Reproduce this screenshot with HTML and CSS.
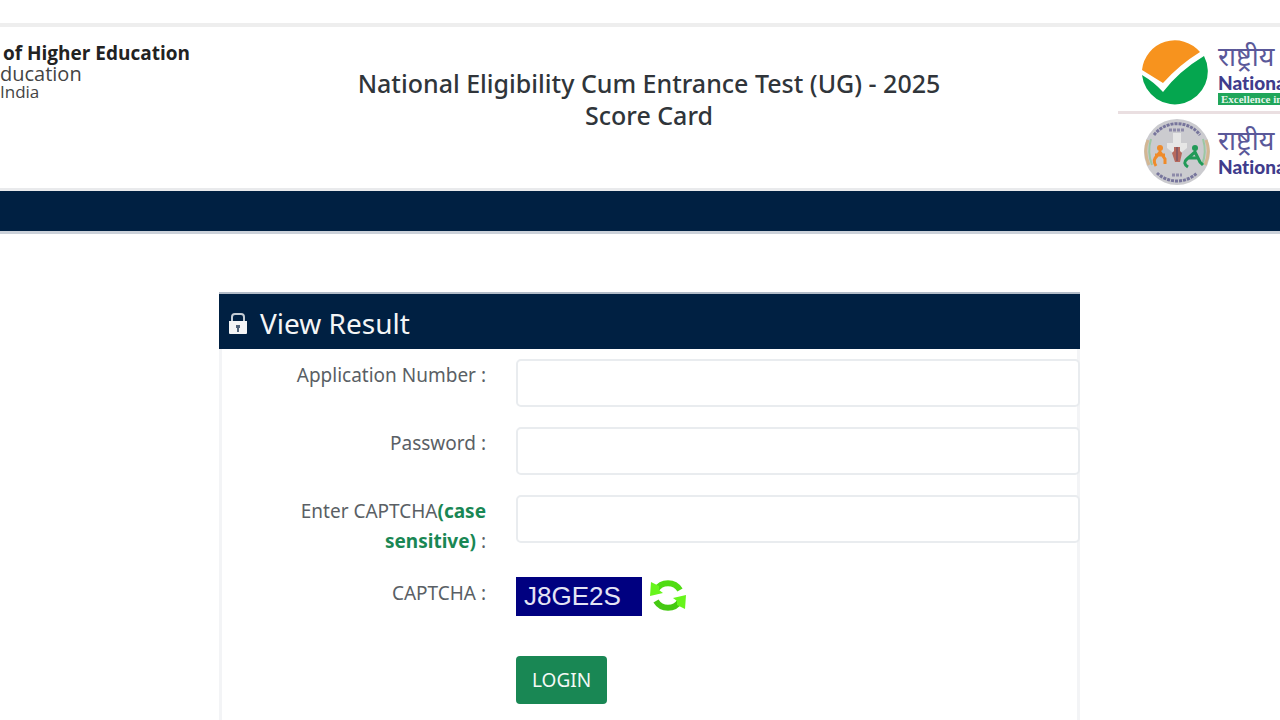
FILE: index.html
```html
<!DOCTYPE html>
<html lang="en">

<head>
    <meta charset="UTF-8">
    <meta name="viewport" content="width=device-width, initial-scale=1.0">
    <title>Score Card</title>
    <link rel="stylesheet" href="styles.css">
</head>

<body>

    <header class="header">
        <div class="department">
            <div class="dept-name">of Higher Education</div>
            <div class="dept-ministry">ducation</div>
            <div class="dept-country">India</div>
        </div>

        <h1 class="title">National Eligibility Cum Entrance Test (UG) - 2025<br>Score Card</h1>

        <div class="logos">
            <div class="logo">
                <svg class="logo-mark" viewBox="0 0 68 68" aria-hidden="true">
                    <path d="M0 32A33 33 0 0 1 58 14Q37 27 21 45Z" fill="#f7931e"/>
                    <path d="M0 37Q12 44 21 54Q37 33 62 18A33 33 0 1 1 0 37Z" fill="#05a64f"/>
                </svg>
                <div class="logo-text">
                    <div class="logo-hindi" lang="hi">राष्ट्रीय</div>
                    <div class="logo-name">Nationa</div>
                    <div class="logo-tag">Excellence in</div>
                </div>
            </div>
            <div class="logo">
                <svg class="logo-mark" viewBox="0 0 68 68" aria-hidden="true">
                    <circle cx="35" cy="34" r="33" fill="#cbcbcf"/>
                    <path d="M12 17A29 29 0 0 1 58 17M15 55A29 29 0 0 0 55 55" fill="none" stroke="#77759c" stroke-width="3" stroke-dasharray="3 1"/>
                    <path d="M6 22Q1 34 7 47" fill="none" stroke="#d3b793" stroke-width="3"/>
                    <path d="M9 21Q5 34 10 47" fill="none" stroke="#9bc7a3" stroke-width="2"/>
                    <path d="M64 22Q69 34 63 47" fill="none" stroke="#d3b793" stroke-width="3"/>
                    <path d="M61 21Q65 34 60 47" fill="none" stroke="#9bc7a3" stroke-width="2"/>
                    <path d="M31 15h8v10h6v5l-5 4h-10l-5-4v-5h6z" fill="#e6e6e6"/>
                    <path d="M27 12h16M30 57h10" stroke="#8d8aa9" stroke-width="3" stroke-dasharray="3 1"/>
                    <circle cx="18" cy="30" r="3" fill="#ef8b2b"/>
                    <path d="M14 48Q10 42 15 38L18 34L23 41V46M13 37H23" fill="none" stroke="#ef8b2b" stroke-width="3"/>
                    <path d="M32 29h6v4l2 2l-2 9h-5l-3-9l2-2z" fill="#b7695d"/>
                    <path d="M35 29v14" stroke="#8b5962" stroke-width="2"/>
                    <circle cx="53" cy="30" r="3" fill="#229a58"/>
                    <path d="M46 49Q40 45 45 41L53 34L58 44L61 47M47 40H57" fill="none" stroke="#229a58" stroke-width="3"/>
                </svg>
                <div class="logo-text">
                    <div class="logo-hindi" lang="hi">राष्ट्रीय</div>
                    <div class="logo-name">Nationa</div>
                </div>
            </div>
        </div>
    </header>

    <nav class="navbar"></nav>

    <main class="content">
        <form class="card">
            <div class="card-header">
                <svg class="lock" viewBox="0 0 18 24" aria-hidden="true">
                    <path d="M3 11V6Q3 3 6 3H12Q15 3 15 6V11" fill="none" stroke="#c4ccd4" stroke-width="2"/>
                    <path d="M0 10H18V22Q18 23 17 23H1Q0 23 0 22Z" fill="#f4f5f6"/>
                    <path d="M7 14h4v3h-1v4h-2v-4h-1z" fill="#52647a"/>
                </svg>
                <h2 class="card-title">View Result</h2>
            </div>

            <div class="card-body">
                <label class="label" for="appno">Application Number :</label>
                <input class="input" type="text" id="appno">

                <label class="label" for="password">Password :</label>
                <input class="input" type="password" id="password">

                <label class="label" for="captcha">Enter CAPTCHA<b class="case">(case sensitive)</b> :</label>
                <input class="input" type="text" id="captcha">

                <div class="label">CAPTCHA :</div>
                <div class="captcha">
                    <span class="captcha-code">J8GE2S</span>
                    <button class="refresh" type="button" aria-label="Refresh">
                        <svg viewBox="0 0 38 38" aria-hidden="true">
                            <path d="M7 13A14 14 0 0 1 31 13" fill="none" stroke="#4fdc12" stroke-width="6"/>
                            <path d="M2 5L1 19L14 16L10 13V9Z" fill="#67f51b"/>
                            <path d="M31 24A14 14 0 0 1 7 24" fill="none" stroke="#45c912" stroke-width="6"/>
                            <path d="M36 32L37 18L24 21L28 24V28Z" fill="#67f51b"/>
                        </svg>
                    </button>
                </div>

                <button class="login" type="submit">LOGIN</button>
            </div>
        </form>
    </main>

</body>

</html>
```
FILE: styles.css
```css
* {
    box-sizing: border-box;
}

body {
    margin: 0;
    padding-top: 23px;
    background-color: #fff;
    color: #30353a;
    font-family: "Noto Sans", "Open Sans", sans-serif;
    overflow-x: hidden;
}

.header {
    height: 168px;
    border-top: 4px solid #eee;
    border-bottom: 3px solid #e9eaec;
    display: grid;
    grid-template-columns: 190px 1fr 172px;
}

.department {
    display: flex;
    flex-direction: column;
    padding-top: 14px;
    overflow: hidden;
    white-space: nowrap;
    font-family: "Open Sans", sans-serif;
    color: #444;
}

.dept-name {
    align-self: flex-end;
    font-size: 19px;
    line-height: 24px;
    font-weight: 700;
    color: #222;
}

.dept-ministry {
    font-size: 20px;
    line-height: 18px;
}

.dept-country {
    font-size: 17px;
    line-height: 18px;
}

.title {
    margin: 0;
    padding-top: 40px;
    font-size: 25px;
    line-height: 32px;
    font-weight: 500;
    text-align: center;
    white-space: nowrap;
}

.logos {
    margin-left: 10px;
    overflow: hidden;
}

.logo {
    display: flex;
    gap: 8px;
    height: 80px;
    padding: 4px 0 0 24px;
    white-space: nowrap;
}

.logo:first-child {
    height: 87px;
    padding-top: 11px;
    border-bottom: 3px solid #eadfe1;
}

.logo-mark {
    width: 68px;
    height: 68px;
    flex: none;
}

.logo-text {
    padding-top: 1px;
}

.logo:last-child .logo-text {
    padding-top: 5px;
}

.logo-hindi {
    font-size: 27px;
    line-height: 34px;
    color: #5a5899;
}

.logo-name {
    font-family: Lato, sans-serif;
    font-size: 19px;
    line-height: 20px;
    font-weight: 900;
    font-variant-ligatures: none;
    color: #403c8c;
}

.logo-tag {
    padding-left: 3px;
    background-color: #20a65a;
    color: #e5f5eb;
    font-family: "Liberation Serif", serif;
    font-size: 11px;
    line-height: 12px;
    font-weight: 700;
}

.navbar {
    height: 43px;
    background-color: #002042;
    border-bottom: 3px solid #cbd1d9;
}

.content {
    padding: 58px 0 0 19px;
}

.card {
    width: 100%;
    max-width: 861px;
    margin: 0 auto;
    border: 3px solid #f3f4f6;
    border-top: 0;
}

.card-header {
    margin: 0 -3px;
    height: 57px;
    padding: 3px 10px 0;
    display: flex;
    align-items: center;
    gap: 13px;
    background-color: #002042;
    border-top: 2px solid #b3bcc8;
    color: #f4f5f6;
}

.lock {
    width: 18px;
    height: 24px;
}

.card-title {
    margin: 0;
    font-size: 28px;
    line-height: 36px;
    font-weight: 400;
}

.card-body {
    display: grid;
    grid-template-columns: 264px 1fr;
    gap: 20px 30px;
    margin-right: -3px;
    padding: 10px 0 16px;
}

.label {
    padding: 1px 0;
    color: #5a5f65;
    font-size: 19px;
    line-height: 30px;
    text-align: right;
}

.case {
    color: #198754;
}

.input {
    width: 100%;
    height: 48px;
    padding: 8px 14px;
    border: 2px solid #e9ecef;
    border-radius: 5px;
    background-color: #fff;
    font-family: inherit;
    font-size: 19px;
}

.captcha {
    display: flex;
    gap: 7px;
    height: 59px;
}

.captcha-code {
    width: 126px;
    height: 39px;
    padding-left: 8px;
    background-color: #000080;
    color: #e4e4f4;
    font-family: "Liberation Sans", Arial, sans-serif;
    font-size: 26px;
    line-height: 38px;
}

.refresh {
    width: 38px;
    height: 38px;
    padding: 0;
    border: 0;
    background: none;
    cursor: pointer;
}

.refresh svg {
    display: block;
}

.login {
    grid-column: 2;
    justify-self: start;
    height: 48px;
    padding: 0 16px;
    border: 0;
    border-radius: 4px;
    background-color: #198754;
    color: #f4f9f6;
    font-family: inherit;
    font-size: 19px;
    cursor: pointer;
}
```
